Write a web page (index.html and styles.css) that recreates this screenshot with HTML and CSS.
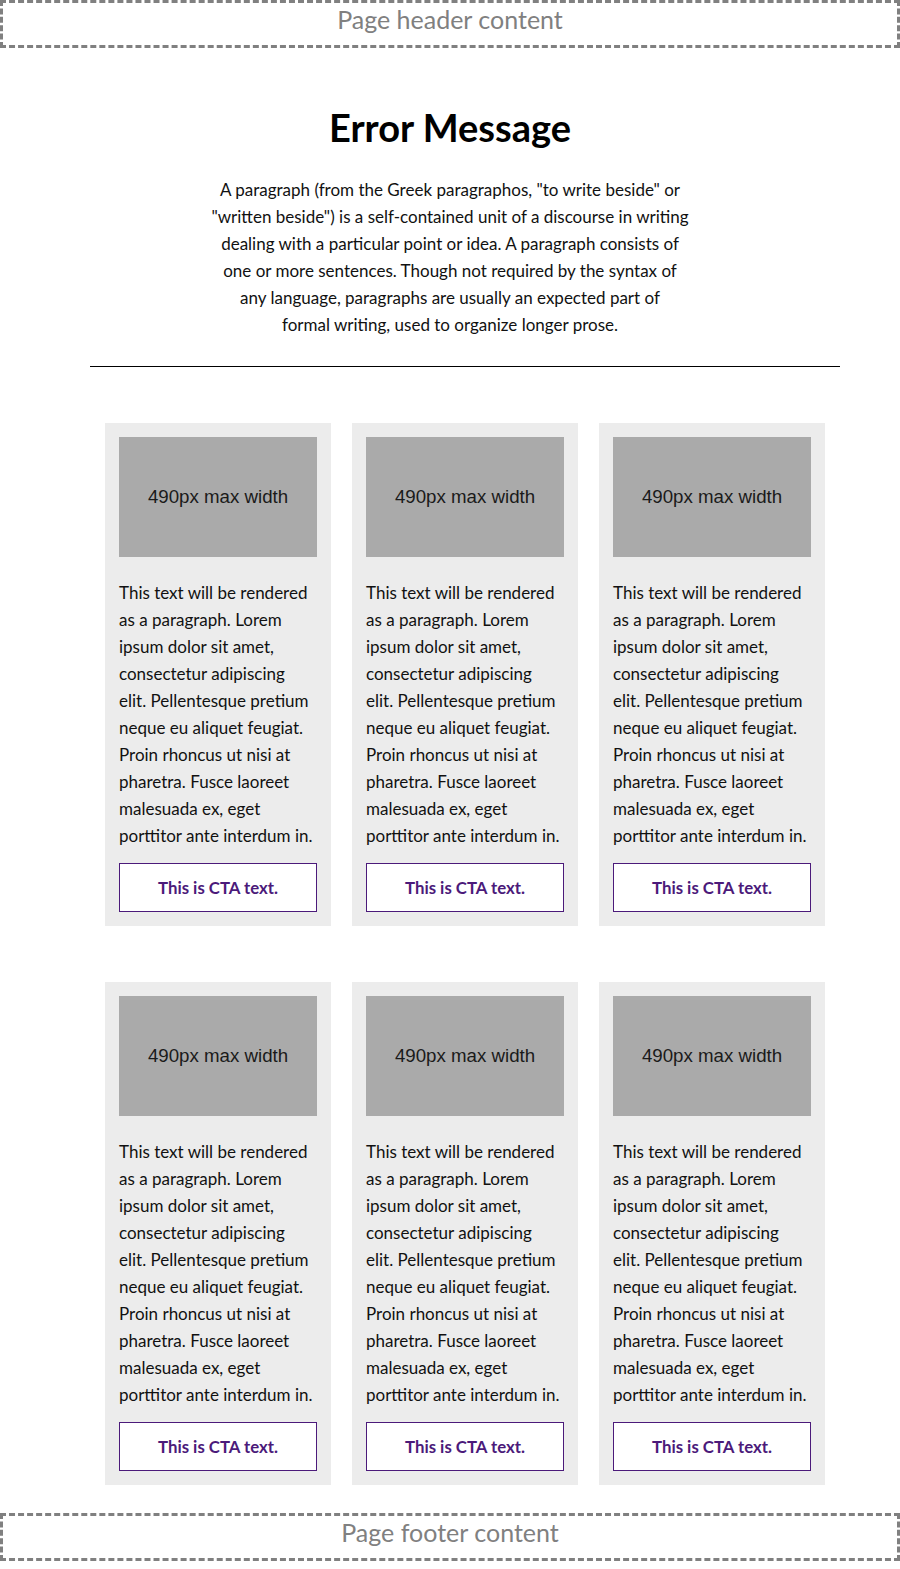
FILE: index.html
```html
<!DOCTYPE html>
<html lang="en">
<head>
<meta charset="utf-8">
<title>Error Message</title>
<link rel="stylesheet" href="styles.css">
</head>
<body>
<header class="page-header">Page header content</header>
<main class="main">
  <section class="intro">
    <h1 class="title">Error Message</h1>
    <p class="lead">A paragraph (from the Greek paragraphos, "to write beside" or<br>"written beside") is a self-contained unit of a discourse in writing<br>dealing with a particular point or idea. A paragraph consists of<br>one or more sentences. Though not required by the syntax of<br>any language, paragraphs are usually an expected part of<br>formal writing, used to organize longer prose.</p>
  </section>
  <div class="content">
    <hr class="rule">
    <div class="grid">
      <div class="card"><div class="media">490px max width</div><p class="card-text">This text will be rendered as a paragraph. Lorem ipsum dolor sit amet, consectetur adipiscing elit. Pellentesque pretium neque eu aliquet feugiat. Proin rhoncus ut nisi at pharetra. Fusce laoreet malesuada ex, eget porttitor ante interdum in.</p><a class="cta" href="#">This is CTA text.</a></div>
      <div class="card"><div class="media">490px max width</div><p class="card-text">This text will be rendered as a paragraph. Lorem ipsum dolor sit amet, consectetur adipiscing elit. Pellentesque pretium neque eu aliquet feugiat. Proin rhoncus ut nisi at pharetra. Fusce laoreet malesuada ex, eget porttitor ante interdum in.</p><a class="cta" href="#">This is CTA text.</a></div>
      <div class="card"><div class="media">490px max width</div><p class="card-text">This text will be rendered as a paragraph. Lorem ipsum dolor sit amet, consectetur adipiscing elit. Pellentesque pretium neque eu aliquet feugiat. Proin rhoncus ut nisi at pharetra. Fusce laoreet malesuada ex, eget porttitor ante interdum in.</p><a class="cta" href="#">This is CTA text.</a></div>
      <div class="card"><div class="media">490px max width</div><p class="card-text">This text will be rendered as a paragraph. Lorem ipsum dolor sit amet, consectetur adipiscing elit. Pellentesque pretium neque eu aliquet feugiat. Proin rhoncus ut nisi at pharetra. Fusce laoreet malesuada ex, eget porttitor ante interdum in.</p><a class="cta" href="#">This is CTA text.</a></div>
      <div class="card"><div class="media">490px max width</div><p class="card-text">This text will be rendered as a paragraph. Lorem ipsum dolor sit amet, consectetur adipiscing elit. Pellentesque pretium neque eu aliquet feugiat. Proin rhoncus ut nisi at pharetra. Fusce laoreet malesuada ex, eget porttitor ante interdum in.</p><a class="cta" href="#">This is CTA text.</a></div>
      <div class="card"><div class="media">490px max width</div><p class="card-text">This text will be rendered as a paragraph. Lorem ipsum dolor sit amet, consectetur adipiscing elit. Pellentesque pretium neque eu aliquet feugiat. Proin rhoncus ut nisi at pharetra. Fusce laoreet malesuada ex, eget porttitor ante interdum in.</p><a class="cta" href="#">This is CTA text.</a></div>
    </div>
  </div>
</main>
<footer class="page-footer">Page footer content</footer>
</body>
</html>
```

FILE: styles.css
```css
* { box-sizing: border-box; }
html, body { margin: 0; padding: 0; background: #fff; }
body {
  font-family: Lato, "Open Sans", sans-serif;
  color: #111;
  width: 900px;
}
.page-header, .page-footer {
  border: 3px dashed #808080;
  height: 48px;
  color: #808080;
  font-size: 25px;
  line-height: 32px;
  text-align: center;
}
.page-footer { margin-top: 28px; }
.intro {
  text-align: center;
  padding-top: 57px;
}
.title {
  margin: 0;
  font-size: 38px;
  font-weight: 700;
  line-height: 44px;
  color: #000;
}
.lead {
  width: 540px;
  margin: 27px auto 0;
  font-size: 17px;
  line-height: 27px;
  color: #111;
}
.content {
  margin-left: 90px;
  width: 750px;
}
.rule {
  border: 0;
  border-top: 1px solid #000;
  margin: 28px 0 0;
  height: 0;
}
.grid {
  display: grid;
  grid-template-columns: repeat(3, 226px);
  column-gap: 21px;
  row-gap: 56px;
  padding: 56px 15px 0;
}
.card {
  background: #ececec;
  padding: 14px;
  display: flex;
  flex-direction: column;
}
.media {
  height: 120px;
  background: #aaa;
  display: flex;
  align-items: center;
  justify-content: center;
  font-family: "Liberation Sans", Arial, sans-serif;
  font-size: 18.7px;
  color: #1a1a1a;
}
.card-text {
  margin: 22px 0 0;
  padding-right: 3px;
  font-size: 17px;
  line-height: 27px;
  color: #111;
}
.cta {
  display: flex;
  align-items: center;
  justify-content: center;
  margin-top: 14px;
  height: 49px;
  background: #fff;
  border: 1px solid #4b1a7a;
  color: #4b1a7a;
  font-weight: 700;
  font-size: 16.8px;
  text-decoration: none;
}
```
